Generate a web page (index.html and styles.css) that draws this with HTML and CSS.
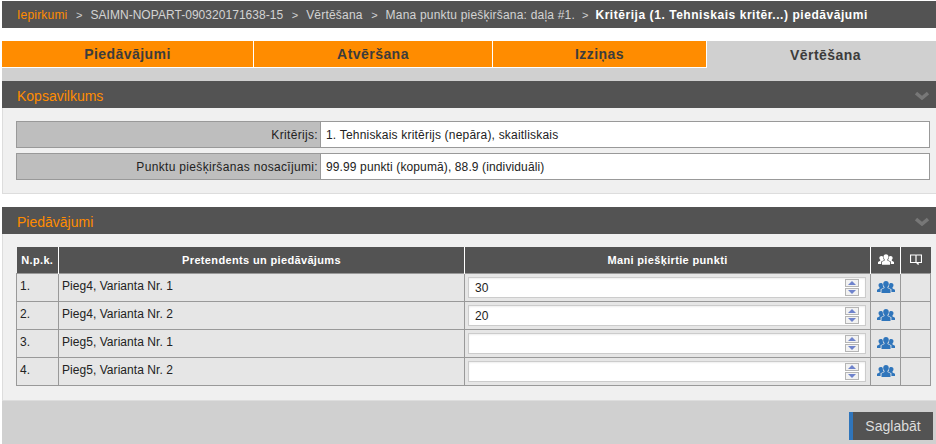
FILE: index.html
```html
<!DOCTYPE html>
<html lang="lv">
<head>
<meta charset="utf-8">
<title>Piedāvājumi</title>
<link rel="stylesheet" href="styles.css">
</head>
<body>
<svg class="defs" width="0" height="0" aria-hidden="true">
  <symbol id="people" viewBox="0 0 18 12">
    <path d="M9 0c1.700 0 2.800 1.200 2.800 3 0 1.300-.6 2.300-1.300 2.900v1.200l3 1.500V12H4.500V8.600l3-1.500V5.900C6.800 5.300 6.200 4.300 6.200 3 6.200 1.200 7.300 0 9 0z"/>
    <path d="M3.800 2c1 0 1.700.4 2 1.200-.1 1.100.2 2.300.9 3.100v.5L3.600 8.300V11H0V8.700l2.500-1.300V6.300C1.900 5.800 1.500 5 1.500 4.200 1.500 2.900 2.500 2 3.800 2z"/>
    <path d="M14.200 2c-1 0-1.700.4-2 1.200.1 1.100-.2 2.300-.9 3.100v.5l3.100 1.500V11H18V8.700l-2.500-1.300V6.300c.6-.5 1-1.300 1-2.100C16.500 2.900 15.500 2 14.200 2z"/>
  </symbol>
</svg>
<nav class="crumbs">
  <a class="crumb-root">Iepirkumi</a><span class="sep">&gt;</span>
  <a class="crumb-code">SAIMN-NOPART-090320171638-15</a><span class="sep">&gt;</span>
  <a>Vērtēšana</a><span class="sep">&gt;</span>
  <a>Mana punktu piešķiršana: daļa #1.</a><span class="sep sep-last">&gt;</span>
  <b>Kritērija (1. Tehniskais kritēr...) piedāvājumi</b>
</nav>
<div class="tabs">
  <div class="tab tab-1">Piedāvājumi</div>
  <div class="tab tab-2">Atvēršana</div>
  <div class="tab tab-3">Izziņas</div>
  <div class="tab tab-4 active">Vērtēšana</div>
</div>
<div class="band"></div>
<section class="section">
  <header class="section-head">
    <h2>Kopsavilkums</h2>
    <svg class="chev" viewBox="0 0 14 9"><path d="M1 2l6 5 6-5" /></svg>
  </header>
  <div class="panel summary">
    <div class="field">
      <div class="field-label">Kritērijs:</div>
      <div class="field-value">1. Tehniskais kritērijs (nepāra), skaitliskais</div>
    </div>
    <div class="field">
      <div class="field-label">Punktu piešķiršanas nosacījumi:</div>
      <div class="field-value field-value-tight">99.99 punkti (kopumā), 88.9 (individuāli)</div>
    </div>
  </div>
</section>
<section class="section section-second">
  <header class="section-head">
    <h2>Piedāvājumi</h2>
    <svg class="chev" viewBox="0 0 14 9"><path d="M1 2l6 5 6-5" /></svg>
  </header>
  <div class="panel offers">
    <table>
      <thead>
        <tr>
          <th class="c-no">N.p.k.</th>
          <th class="c-name">Pretendents un piedāvājums</th>
          <th class="c-points">Mani piešķirtie punkti</th>
          <th class="c-icon"><svg class="ico ico-head"><use href="#people"/></svg></th>
          <th class="c-icon"><svg class="book" viewBox="0 0 12 11"><path d="M.5 1h4.800c.4 0 .7.2.7.5 0-.3.3-.5.700-.5h4.800v7.500H7.500L8.500 10.500 6.500 8.500H.5zM6 1.500v7"/></svg></th>
        </tr>
      </thead>
      <tbody>
        <tr>
          <td>1.</td><td>Pieg4, Varianta Nr. 1</td>
          <td class="input-cell"><div class="spin"><span class="spin-val">30</span><span class="arrows"><i class="up"></i><i class="down"></i></span></div></td>
          <td class="icon-cell"><svg class="ico"><use href="#people"/></svg></td><td></td>
        </tr>
        <tr>
          <td>2.</td><td>Pieg4, Varianta Nr. 2</td>
          <td class="input-cell"><div class="spin"><span class="spin-val">20</span><span class="arrows"><i class="up"></i><i class="down"></i></span></div></td>
          <td class="icon-cell"><svg class="ico"><use href="#people"/></svg></td><td></td>
        </tr>
        <tr>
          <td>3.</td><td>Pieg5, Varianta Nr. 1</td>
          <td class="input-cell"><div class="spin"><span class="spin-val"></span><span class="arrows"><i class="up"></i><i class="down"></i></span></div></td>
          <td class="icon-cell"><svg class="ico"><use href="#people"/></svg></td><td></td>
        </tr>
        <tr>
          <td>4.</td><td>Pieg5, Varianta Nr. 2</td>
          <td class="input-cell"><div class="spin"><span class="spin-val"></span><span class="arrows"><i class="up"></i><i class="down"></i></span></div></td>
          <td class="icon-cell"><svg class="ico"><use href="#people"/></svg></td><td></td>
        </tr>
      </tbody>
    </table>
  </div>
</section>
<footer class="actions">
  <button class="save" type="button">Saglabāt</button>
</footer>
</body>
</html>
```
FILE: styles.css
```css
* { box-sizing: border-box; }
html, body { margin: 0; padding: 0; }
body {
  width: 936px;
  height: 444px;
  overflow: hidden;
  background: #fff;
  font-family: "Liberation Sans", Arial, sans-serif;
  font-size: 12px;
  color: #222;
  padding: 1px 0 0 2px;
}
.defs { position: absolute; }
.crumbs {
  height: 27px;
  background: #535353;
  padding: 0 0 0 15px;
  display: flex;
  align-items: center;
  font-size: 12px;
  white-space: pre;
  letter-spacing: .2px;
}
.crumbs a { color: #d3d3d3; }
.crumbs .crumb-root { color: #ff8c00; }
.crumbs .crumb-code { letter-spacing: .04px; }
.crumbs .sep { margin: 0 8px 0 8.5px; color: #d3d3d3; font-size: 11px; letter-spacing: 0; }
.crumbs .sep-last { margin: 0 7px 0 7px; }
.crumbs b { color: #fff; letter-spacing: .55px; }
.tabs {
  display: flex;
  margin-top: 13px;
  height: 27px;
}
.tab {
  background: #ff8c00;
  border-right: 1px solid #fff;
  border-bottom: 1px solid #fff;
  display: flex;
  align-items: center;
  justify-content: center;
  font-size: 14px;
  font-weight: bold;
  letter-spacing: .45px;
  color: #3c3c3c;
}
.tab-1 { width: 252px; }
.tab-2 { width: 239px; }
.tab-3 { width: 214px; }
.tab-4 { flex: 1; padding-left: 8px; }
.tab.active { background: #d0d0d0; border: 0; }
.band { height: 13px; background: #d0d0d0; }
.section-head {
  height: 27px;
  background: #535353;
  display: flex;
  align-items: center;
  justify-content: space-between;
  padding: 2px 7px 0 15px;
}
.section-head h2 {
  margin: 0;
  font-size: 14px;
  font-weight: normal;
  color: #ff8c00;
}
.chev { width: 14px; height: 9px; fill: none; stroke: #777; stroke-width: 3.5; }
.panel {
  background: #f0f0f0;
  border-left: 1px solid #ddd;
  border-bottom: 1px solid #ddd;
  padding: 13px 6px 0 13px;
}
.summary { height: 86px; }
.field {
  display: flex;
  height: 27px;
  border: 1px solid #999;
  margin-bottom: 5px;
}
.field-label {
  width: 304px;
  background: #bebebe;
  border-right: 1px solid #999;
  text-align: right;
  padding: 1px 2px 0 0;
  line-height: 25px;
  color: #222;
  letter-spacing: .33px;
}
.field-value {
  flex: 1;
  background: #fff;
  padding: 1px 0 0 5px;
  line-height: 25px;
  color: #222;
  letter-spacing: .2px;
}
.field-value-tight { letter-spacing: .12px; }
.section-second { margin-top: 13px; }
.offers { height: 167px; padding-top: 13px; }
table {
  width: 914px;
  border-collapse: collapse;
  table-layout: fixed;
}
th {
  height: 26px;
  padding: 0;
  background: #535353;
  color: #fff;
  font-size: 11px;
  font-weight: bold;
  letter-spacing: .35px;
  text-align: center;
  border-left: 1px solid #fff;
}
th:first-child { border-left: 0; }
.c-no { width: 42px; }
.c-name { width: 406px; }
.c-points { width: 406px; }
.c-icon { width: 30px; }
td {
  height: 28px;
  padding: 0 0 3px 3px;
  background: #e6e6e6;
  border: 1px solid #999;
  letter-spacing: .05px;
}
.input-cell { padding: 3px 3px 2px 3px; }
.icon-cell { padding: 0; text-align: center; }
.spin {
  height: 21px;
  background: #fff;
  border: 1px solid #ccc;
  box-shadow: inset 0 1px 2px #eee;
  display: flex;
  align-items: center;
  justify-content: space-between;
  padding: 0 6px 0 6px;
  width: 398px;
}
.spin-val { font-size: 12px; color: #222; }
.arrows { display: flex; flex-direction: column; gap: 1px; }
.arrows i {
  display: flex;
  align-items: center;
  justify-content: center;
  width: 14px;
  height: 8px;
  background: #f2f2f2;
  border: 1px solid #b5b5b5;
}
.arrows .up::before {
  content: "";
  border: 4px solid transparent;
  border-top: 0;
  border-bottom: 4px solid #6f83cc;
}
.arrows .down::before {
  content: "";
  border: 4px solid transparent;
  border-bottom: 0;
  border-top: 4px solid #6f83cc;
}
.ico { width: 18px; height: 12px; fill: #2f75bb; display: block; margin: 0 auto; }
.ico-head { fill: #fff; width: 16px; height: 11px; }
.book { width: 12px; height: 11px; display: block; margin: 0 auto; fill: none; stroke: #fff; stroke-width: 1.2; }
.actions {
  height: 43px;
  background: #d0d0d0;
  display: flex;
  justify-content: flex-end;
  align-items: flex-start;
  padding: 11px 3px 0 0;
}
.save {
  width: 84px;
  height: 28px;
  background: #535353;
  border: 0;
  border-left: 4px solid #2f75bb;
  color: #dcdcdc;
  font-family: "Liberation Sans", Arial, sans-serif;
  font-size: 14px;
  padding: 0;
}
```
